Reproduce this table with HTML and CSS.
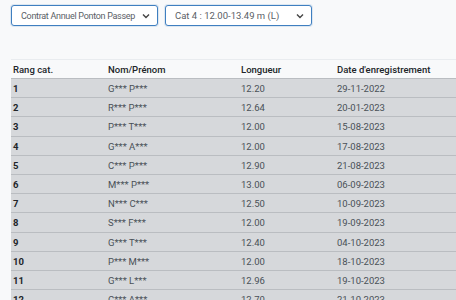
FILE: index.html
```html
<!DOCTYPE html>
<html lang="fr">
<head>
    <meta charset="UTF-8">
    <title>Liste d'attente</title>
    <link rel="stylesheet" href="styles.css">
</head>
<body>

    <!-- Filters -->
    <div class="filters">
        <div class="select-box">
            <span class="select-label tight">Contrat Annuel Ponton Passep</span>
            <svg class="chevron" width="8" height="6" viewBox="0 0 8 6"><path d="M1 1.5 L4 4.5 L7 1.5" fill="none" stroke="#444" stroke-width="1.4"/></svg>
        </div>
        <div class="select-box">
            <span class="select-label">Cat 4 : 12.00-13.49 m (L)</span>
            <svg class="chevron" width="8" height="6" viewBox="0 0 8 6"><path d="M1 1.5 L4 4.5 L7 1.5" fill="none" stroke="#444" stroke-width="1.4"/></svg>
        </div>
    </div>

    <!-- Ranking table -->
    <div class="table-wrap">
        <table class="rank-table">
            <thead>
                <tr>
                    <th class="c-rank">Rang cat.</th>
                    <th class="c-name">Nom/Prénom</th>
                    <th class="c-len">Longueur</th>
                    <th class="c-date">Date d'enregistrement</th>
                </tr>
            </thead>
            <tbody>
                <tr><th>1</th><td>G*** P***</td><td>12.20</td><td>29-11-2022</td></tr>
                <tr><th>2</th><td>R*** P***</td><td>12.64</td><td>20-01-2023</td></tr>
                <tr><th>3</th><td>P*** T***</td><td>12.00</td><td>15-08-2023</td></tr>
                <tr><th>4</th><td>G*** A***</td><td>12.00</td><td>17-08-2023</td></tr>
                <tr><th>5</th><td>C*** P***</td><td>12.90</td><td>21-08-2023</td></tr>
                <tr><th>6</th><td>M*** P***</td><td>13.00</td><td>06-09-2023</td></tr>
                <tr><th>7</th><td>N*** C***</td><td>12.50</td><td>10-09-2023</td></tr>
                <tr><th>8</th><td>S*** F***</td><td>12.00</td><td>19-09-2023</td></tr>
                <tr><th>9</th><td>G*** T***</td><td>12.40</td><td>04-10-2023</td></tr>
                <tr><th>10</th><td>P*** M***</td><td>12.00</td><td>18-10-2023</td></tr>
                <tr><th>11</th><td>G*** L***</td><td>12.96</td><td>19-10-2023</td></tr>
                <tr><th>12</th><td>C*** A***</td><td>12.70</td><td>21-10-2023</td></tr>
            </tbody>
        </table>
    </div>

</body>
</html>
```

FILE: styles.css
```css
/* Root variables for colors */
:root {
    --page-bg: #f8f9fa;
    --row-bg: #d6d8db;
    --row-line: #babdc1;
    --text-color: #212529;
    --muted: #495057;
    --focus: #3f7fc0;
}

* {
    margin: 0;
    padding: 0;
    box-sizing: border-box;
    font-family: Roboto, "Liberation Sans", sans-serif;
}

body {
    background-color: var(--page-bg);
    color: var(--text-color);
    overflow: hidden;
    width: 456px;
    height: 300px;
}

/* Filters */
.filters {
    display: flex;
    gap: 7px;
    padding: 5px 0 0 11px;
}

.select-box {
    width: 147px;
    height: 21px;
    background: white;
    border: 1px solid var(--focus);
    border-radius: 3px;
    box-shadow: 0 0 0 1px rgba(63, 127, 192, 0.15);
    display: flex;
    align-items: center;
    gap: 3px;
    padding: 0 7px 0 9px;
    font-size: 9.5px;
    color: #5a6066;
    white-space: nowrap;
}

.select-label {
    flex: 1;
    overflow: hidden;
}

.select-label.tight {
    font-size: 9px;
    letter-spacing: -0.3px;
}

.chevron {
    flex-shrink: 0;
}

/* Table */
.table-wrap {
    margin: 33px 0 0 11px;
    width: 600px;
}

.rank-table {
    width: 600px;
    border-collapse: collapse;
    font-size: 9.5px;
    line-height: 13px;
}

.rank-table th,
.rank-table td {
    text-align: left;
    padding: 3px 2px 2.2px 2px;
    border-top: 1px solid var(--row-line);
}

.rank-table thead th {
    font-weight: 500;
    color: var(--text-color);
    border-top: 1px solid #e9ecef;
    border-bottom: 1px solid var(--row-line);
    padding: 3px 2px 2px 2px;
}

.rank-table tbody tr {
    background: var(--row-bg);
}

.rank-table tbody th {
    font-weight: 700;
    color: var(--text-color);
}

.rank-table tbody td {
    color: var(--muted);
}

.c-rank { width: 95px; }
.c-name { width: 133px; }
.c-len { width: 96px; }
```
